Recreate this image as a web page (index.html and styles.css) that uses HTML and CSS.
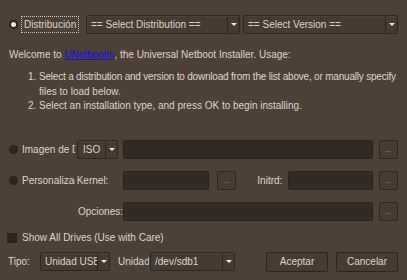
FILE: index.html
```html
<!DOCTYPE html>
<html>
<head>
    <title>UNetbootin</title>
    <meta charset="utf-8">
    <link rel="stylesheet" href="styles.css">
</head>
<body>
    <div class="window">
        <div class="row row-distro">
            <div class="opt">
                <span class="radio checked"></span>
                <span class="focus-label">Distribución</span>
            </div>
            <div class="combo combo-distro">
                <span class="combo-text">== Select Distribution ==</span>
                <span class="combo-arrow"><i></i></span>
            </div>
            <div class="combo combo-version">
                <span class="combo-text">== Select Version ==</span>
                <span class="combo-arrow"><i></i></span>
            </div>
        </div>

        <div class="intro">
            <p>Welcome to <a href="#">UNetbootin</a>, the Universal Netboot Installer. Usage:</p>
            <ol>
                <li><span class="nowrap">Select a distribution and version to download from the list above, or manually specify</span><br>files to load below.</li>
                <li>Select an installation type, and press OK to begin installing.</li>
            </ol>
        </div>

        <div class="row row-disk">
            <div class="opt opt-narrow">
                <span class="radio"></span>
                <span class="clip-label">Imagen de Disco</span>
            </div>
            <div class="combo combo-iso">
                <span class="combo-text">ISO</span>
                <span class="combo-arrow"><i></i></span>
            </div>
            <div class="field field-wide"></div>
            <button class="dots">...</button>
        </div>

        <div class="row row-custom">
            <div class="opt opt-narrow">
                <span class="radio"></span>
                <span class="clip-label">Personalizado</span>
            </div>
            <span class="field-label">Kernel:</span>
            <div class="field field-kernel"></div>
            <button class="dots dots-kernel">...</button>
            <span class="field-label initrd-label">Initrd:</span>
            <div class="field field-initrd"></div>
            <button class="dots">...</button>
        </div>

        <div class="row row-options">
            <span class="field-label options-label">Opciones:</span>
            <div class="field field-wide"></div>
            <button class="dots">...</button>
        </div>

        <div class="row row-check">
            <span class="checkbox"></span>
            <span>Show All Drives (Use with Care)</span>
        </div>

        <div class="row row-bottom">
            <span class="tipo-label">Tipo:</span>
            <div class="combo combo-type">
                <span class="combo-text">Unidad USB</span>
                <span class="combo-arrow"><i></i></span>
            </div>
            <span class="unit-label">Unidad</span>
            <div class="combo combo-drive">
                <span class="combo-text">/dev/sdb1</span>
                <span class="combo-arrow"><i></i></span>
            </div>
            <button class="btn btn-ok">Aceptar</button>
            <button class="btn">Cancelar</button>
        </div>
    </div>
</body>
</html>
```

FILE: styles.css
```css
body {
    margin: 0;
    background-color: #4c4037;
    font-family: "Liberation Sans", Arial, sans-serif;
    font-size: 10px;
    color: #ddd6ce;
}
.window {
    padding: 15px 9px 0 7px;
}
.row {
    display: flex;
    align-items: center;
}
.row-distro {
    height: 19px;
}
.opt {
    display: flex;
    align-items: center;
    width: 79px;
}
.opt-narrow {
    width: 70px;
}
.radio {
    flex: none;
    width: 9px;
    height: 9px;
    border-radius: 50%;
    background-color: #2b231e;
    margin-left: 2px;
    box-sizing: border-box;
}
.radio.checked {
    background-color: #f2eee8;
    border: 2px solid #2b231e;
}
.focus-label {
    margin-left: 3px;
    padding: 2px 2px;
    border: 1px dotted #cfc7bd;
    line-height: 11px;
}
.clip-label {
    margin-left: 4px;
    white-space: nowrap;
    overflow: hidden;
    width: 53px;
}
.combo {
    display: flex;
    align-items: stretch;
    height: 19px;
    box-sizing: border-box;
    border: 1px solid #2e2620;
    border-radius: 2px;
    background-color: #463a31;
    box-shadow: inset 0 1px 0 rgba(255,255,255,0.04);
}
.combo-text {
    flex: 1;
    padding-left: 4px;
    line-height: 17px;
    white-space: nowrap;
    overflow: hidden;
}
.combo-arrow {
    flex: none;
    width: 11px;
    border-left: 1px solid #2e2620;
    display: flex;
    align-items: center;
    justify-content: center;
}
.combo-arrow i {
    width: 0;
    height: 0;
    border-left: 3px solid transparent;
    border-right: 3px solid transparent;
    border-top: 3px solid #eeeae4;
}
.combo-distro {
    width: 154px;
}
.combo-version {
    width: 155px;
    margin-left: 3px;
}
.intro {
    margin-top: 14px;
    margin-right: -9px;
    line-height: 14.5px;
}
.intro p {
    margin: 0 0 7.5px 2px;
}
.intro a {
    color: #1010e0;
}
.intro ol {
    margin: 0;
    padding-left: 32px;
}
.nowrap {
    white-space: nowrap;
    letter-spacing: -0.2px;
}
.row-disk {
    margin-top: 26px;
}
.combo-iso {
    width: 41px;
}
.combo-iso .combo-text {
    padding-left: 5px;
}
.field {
    height: 19px;
    box-sizing: border-box;
    background-color: #332a24;
    border: 1px solid #2a221d;
    border-radius: 2px;
}
.field-wide {
    width: 250px;
    margin-left: 5px;
}
.dots {
    flex: none;
    width: 19px;
    height: 19px;
    margin-left: 6px;
    padding: 0;
    box-sizing: border-box;
    border: 1px solid #2e2620;
    border-radius: 2px;
    background-color: #473b32;
    color: #b8afa5;
    font-family: "Liberation Sans", Arial, sans-serif;
    font-size: 7px;
    line-height: 15px;
}
.row-custom {
    margin-top: 12px;
}
.field-label {
    width: 46px;
    flex: none;
}
.field-kernel {
    width: 87px;
}
.dots-kernel {
    margin-left: 8px;
}
.initrd-label {
    width: 31px;
    margin-left: 21px;
}
.field-initrd {
    width: 85px;
}
.row-options {
    margin-top: 12px;
    padding-left: 70px;
}
.options-label {
    margin-left: 1px;
    width: 45px;
}
.row-options .field-wide {
    margin-left: 0;
}
.row-check {
    margin-top: 12px;
    height: 10px;
}
.checkbox {
    width: 10px;
    height: 10px;
    background-color: #2b231e;
    margin-right: 5px;
}
.row-bottom {
    margin-top: 9px;
}
.tipo-label {
    width: 32px;
    margin-left: 1px;
}
.combo-type {
    width: 70px;
}
.combo-type .combo-text {
    padding-left: 4px;
}
.unit-label {
    width: 31px;
    margin-left: 8px;
    white-space: nowrap;
    overflow: hidden;
}
.combo-drive {
    width: 85px;
    margin-left: 1px;
}
.btn {
    width: 62px;
    height: 20px;
    margin-left: 8px;
    padding: 0;
    border: 1px solid #2e2620;
    border-radius: 2px;
    background-color: #473b32;
    color: #ddd6ce;
    font-family: "Liberation Sans", Arial, sans-serif;
    font-size: 10px;
}
.btn-ok {
    margin-left: auto;
}
```
